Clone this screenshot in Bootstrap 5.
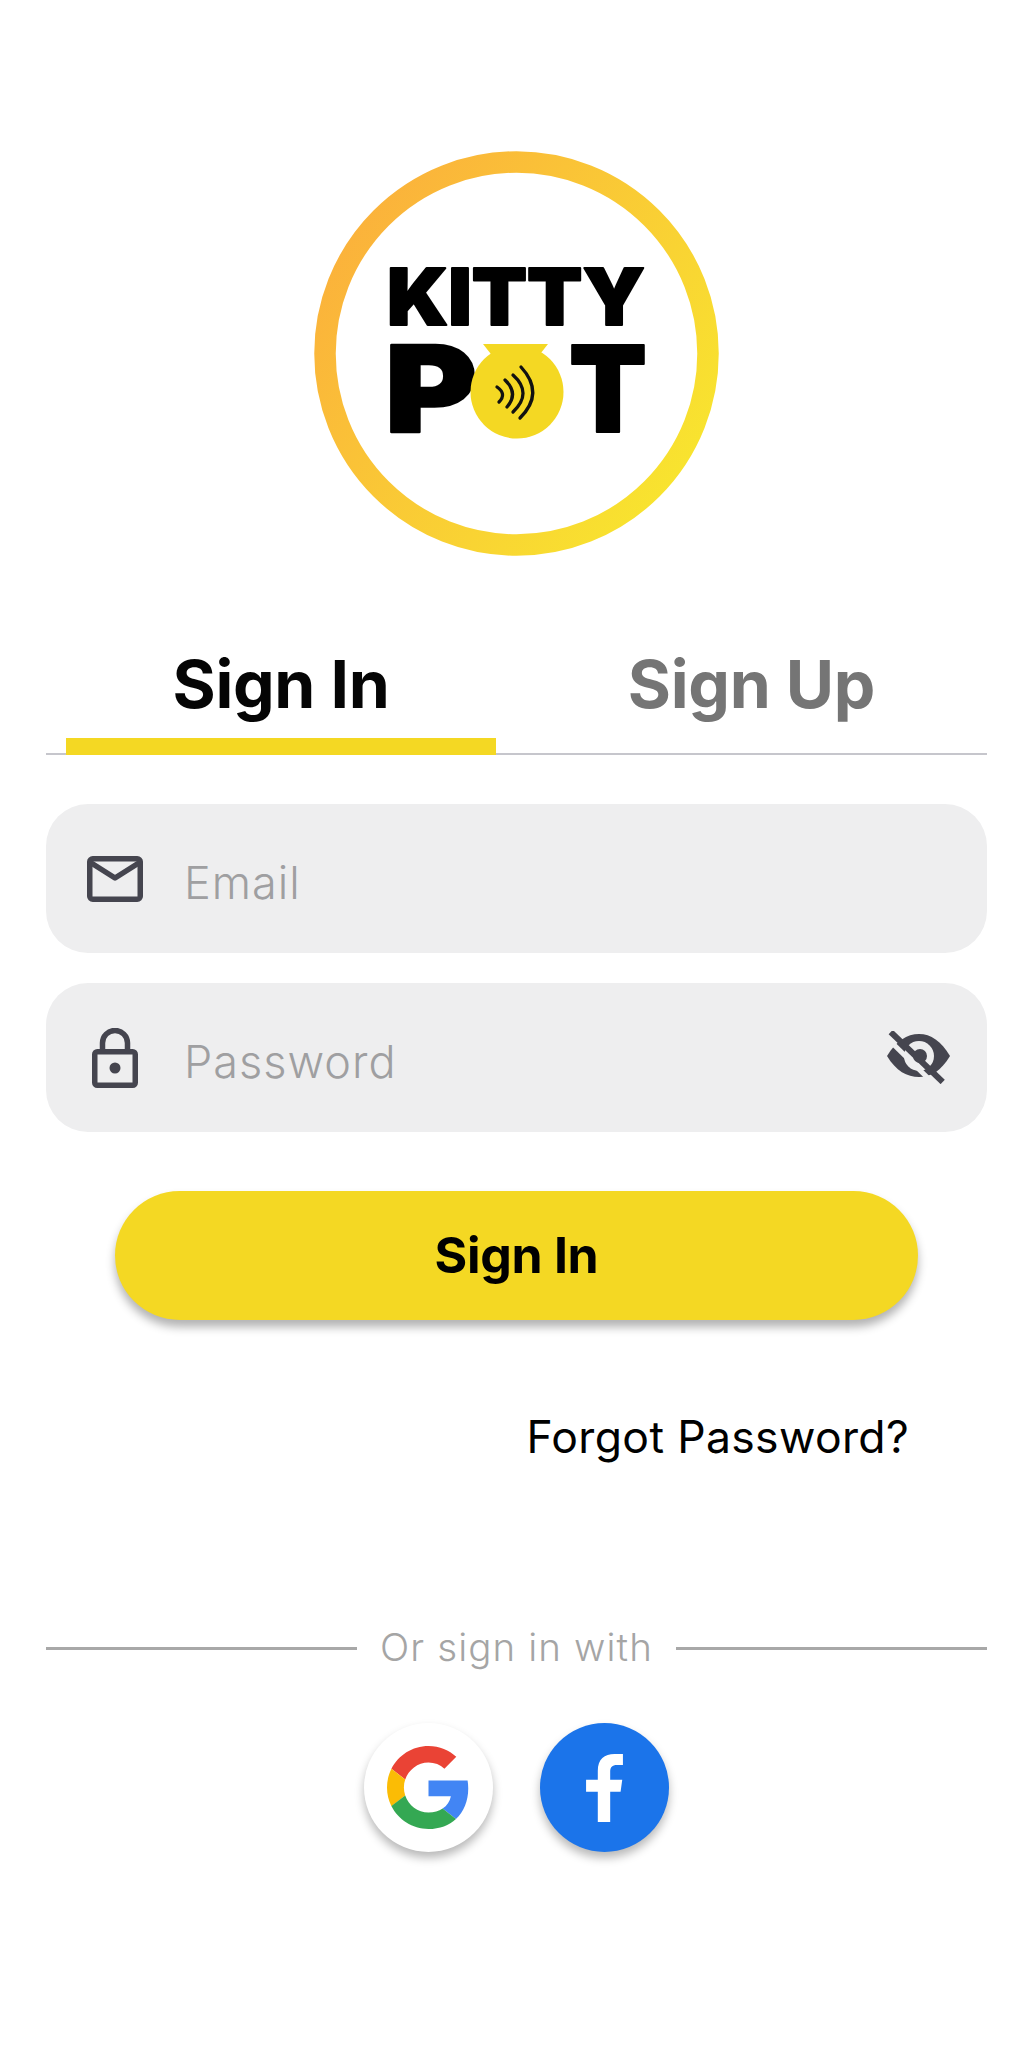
<!DOCTYPE html>
<html lang="en">
<head>
<meta charset="utf-8">
<title>Kitty Pot – Sign In</title>
<link rel="stylesheet" href="https://cdn.jsdelivr.net/npm/bootstrap@5.3.0/dist/css/bootstrap.min.css">
<style>
body{background:#fff;font-family:Inter,"Noto Sans",sans-serif;color:#000;width:1033px;height:2048px;overflow:hidden}
.app-page{padding:151px 46px 0}
.app-logo{display:block;width:403px;height:404px;margin:0 auto;overflow:visible}
.logo-word{font-family:Inter,"Liberation Sans",sans-serif;font-weight:900;fill:#000;stroke:#000;stroke-linejoin:round}
.tabs-bar{margin-top:89px;height:111px;padding-left:20px;border-bottom:2px solid #c6c6cc}
.tab-item{height:111px;font-size:66px;font-weight:700;line-height:1;letter-spacing:-.3px;background:none;border:0;padding:0 0 31px;display:flex;align-items:center;justify-content:center}
.tab-on{width:430px;color:#050505;border-bottom:17px solid #f4d823;padding-bottom:14px}
.tab-off{flex:1;margin-left:20px;color:#757575}
.field-box{height:149px;background:#eeeeef;border-radius:42px;padding:0 37px 0 41px}
.field-icon{width:56px;flex:none}
.field-box .form-control{background:transparent;border:0;box-shadow:none;padding:9px 0 0;margin-left:41px;font-family:Inter,sans-serif;font-size:45px;font-weight:300;letter-spacing:1px;height:auto;color:#333;border-radius:0}
.field-box .form-control::placeholder{color:#9f9fa1;opacity:1}
.first-field{margin-top:49px}
.next-field{margin-top:30px}
.main-btn{display:block;width:803px;height:129px;margin:59px auto 0;background:#f4d823;border:0;border-radius:65px;font-size:50px;font-weight:700;letter-spacing:-.3px;color:#000;box-shadow:0 7px 10px rgba(0,0,0,.3)}
.main-btn:hover,.main-btn:active{background:#f4d823!important;color:#000!important}
.forgot-row{margin-top:89px;padding-right:78px;line-height:56px}
.forgot-link{font-size:44.5px;color:#000;text-decoration:none;font-weight:400;letter-spacing:.35px}
.or-row{margin-top:148px;height:50px;color:#a5a5a5;font-size:38.5px;font-weight:300;letter-spacing:1.1px;gap:23px}
.or-line{flex:1;height:3px;background:#a8a8a8}
.social-row{margin-top:50px;gap:47px}
.social-btn{width:129px;height:129px;border-radius:50%;border:0;padding:0;box-shadow:0 6px 10px rgba(0,0,0,.28)}
.social-g{background:#fff}
.social-f{background:#1b74ea}
</style>
</head>
<body>
<main class="app-page">
  <svg class="app-logo" viewBox="0 0 403 404" role="img" aria-label="Kitty Pot logo">
    <defs>
      <linearGradient id="ringGrad" x1="0" y1="0.15" x2="1" y2="0.85">
        <stop offset="0" stop-color="#fbaf3c"/>
        <stop offset="1" stop-color="#f8e72e"/>
      </linearGradient>
    </defs>
    <circle cx="201.5" cy="202.5" r="191.500" fill="#fff" stroke="url(#ringGrad)" stroke-width="21.500"/>
    <text class="logo-word" x="72" y="174" font-size="78" stroke-width="2" textLength="258" lengthAdjust="spacingAndGlyphs">KITTY</text>
    <text class="logo-word" x="70" y="281" font-size="120" stroke-width="2.500" textLength="92" lengthAdjust="spacingAndGlyphs">P</text>
    <text class="logo-word" x="254" y="281" font-size="120" stroke-width="2" textLength="78" lengthAdjust="spacingAndGlyphs">T</text>
    <path d="M168 193H233L222 207H179Z" fill="#f4d823"/>
    <circle cx="202" cy="241" r="46.500" fill="#f4d823"/>
    <g fill="none" stroke="#111" stroke-width="3.300" stroke-linecap="round">
      <path d="M182 236Q192 243 184 251"/>
      <path d="M190 229Q204 242 192 256"/>
      <path d="M198 224Q218 242 198 261"/>
      <path d="M206 216Q230 242 205 267"/>
    </g>
  </svg>

  <div class="tabs-bar d-flex align-items-start">
    <button type="button" class="tab-item tab-on">Sign In</button>
    <button type="button" class="tab-item tab-off">Sign Up</button>
  </div>

  <div class="field-box first-field d-flex align-items-center">
    <svg class="field-icon" width="56" height="46" viewBox="0 0 56 46" fill="none" stroke="#45454f" stroke-width="5.5" stroke-linejoin="round" stroke-linecap="round">
      <rect x="2.75" y="2.75" width="50.5" height="40.5" rx="3"/>
      <path d="M3.5 6.5L28 22L52.500 6.500"/>
    </svg>
    <input class="form-control" type="email" placeholder="Email" aria-label="Email">
  </div>

  <div class="field-box next-field d-flex align-items-center">
    <svg class="field-icon" width="56" height="60" viewBox="0 0 56 60" fill="none" stroke="#45454f" stroke-width="5.500" stroke-linejoin="round">
      <rect x="7.750" y="23.750" width="40.500" height="33.500" rx="2.500"/>
      <path d="M15.500 23V15A12.500 12.500 0 0 1 40.500 15V23"/>
      <circle cx="28" cy="40" r="5.500" fill="#45454f" stroke="none"/>
    </svg>
    <input class="form-control" type="password" placeholder="Password" aria-label="Password">
    <svg class="flex-shrink-0" width="63" height="53" viewBox="0 0 63 53">
      <path d="M0 25C9 10 20 3 32 3S54 10 63 25C54 40 44 46 32 46S9 40 0 25Z" fill="#45454f"/>
      <circle cx="32" cy="25" r="15" fill="#eeeeef"/>
      <circle cx="33" cy="25" r="7" fill="#45454f"/>
      <path d="M-1 6L47 53" stroke="#eeeeef" stroke-width="5"/>
      <path d="M3.700 1L55.700 51" stroke="#45454f" stroke-width="6"/>
    </svg>
  </div>

  <button type="button" class="btn main-btn">Sign In</button>

  <div class="forgot-row text-end"><a class="forgot-link" href="#">Forgot Password?</a></div>

  <div class="or-row d-flex align-items-center">
    <span class="or-line"></span>
    <span>Or sign in with</span>
    <span class="or-line"></span>
  </div>

  <div class="social-row d-flex justify-content-center">
    <button type="button" class="social-btn social-g d-flex align-items-center justify-content-center" aria-label="Sign in with Google">
      <svg width="83" height="83" viewBox="0 0 48 48">
        <path fill="#EA4335" d="M24 9.500c3.540 0 6.710 1.220 9.210 3.600l6.850-6.850C35.900 2.380 30.470 0 24 0 14.620 0 6.510 5.380 2.560 13.220l7.980 6.190C12.430 13.720 17.740 9.500 24 9.500z"/>
        <path fill="#4285F4" d="M46.980 24.550c0-1.570-.15-3.090-.38-4.550H24v9.020h12.940c-.58 2.960-2.260 5.480-4.780 7.180l7.730 6c4.510-4.180 7.090-10.360 7.090-17.650z"/>
        <path fill="#FBBC05" d="M10.530 28.590c-.48-1.450-.76-2.990-.76-4.590s.27-3.140.76-4.590l-7.980-6.190C.92 16.460 0 20.120 0 24c0 3.880.92 7.540 2.560 10.780l7.970-6.190z"/>
        <path fill="#34A853" d="M24 48c6.480 0 11.930-2.130 15.890-5.810l-7.730-6c-2.150 1.450-4.920 2.300-8.160 2.300-6.260 0-11.570-4.220-13.470-9.910l-7.980 6.190C6.510 42.620 14.620 48 24 48z"/>
      </svg>
    </button>
    <button type="button" class="social-btn social-f d-flex align-items-center justify-content-center" aria-label="Sign in with Facebook">
      <svg width="37" height="68" viewBox="0 0 110 203">
        <path fill="#fff" d="M35 203V113H0V77H35V50C35 15 55 0 85 0H110V33H92C78 33 72 40 72 52V77H108L103 113H72V203Z"/>
      </svg>
    </button>
  </div>
</main>
<script src="https://cdn.jsdelivr.net/npm/bootstrap@5.3.0/dist/js/bootstrap.bundle.min.js"></script>
</body>
</html>
